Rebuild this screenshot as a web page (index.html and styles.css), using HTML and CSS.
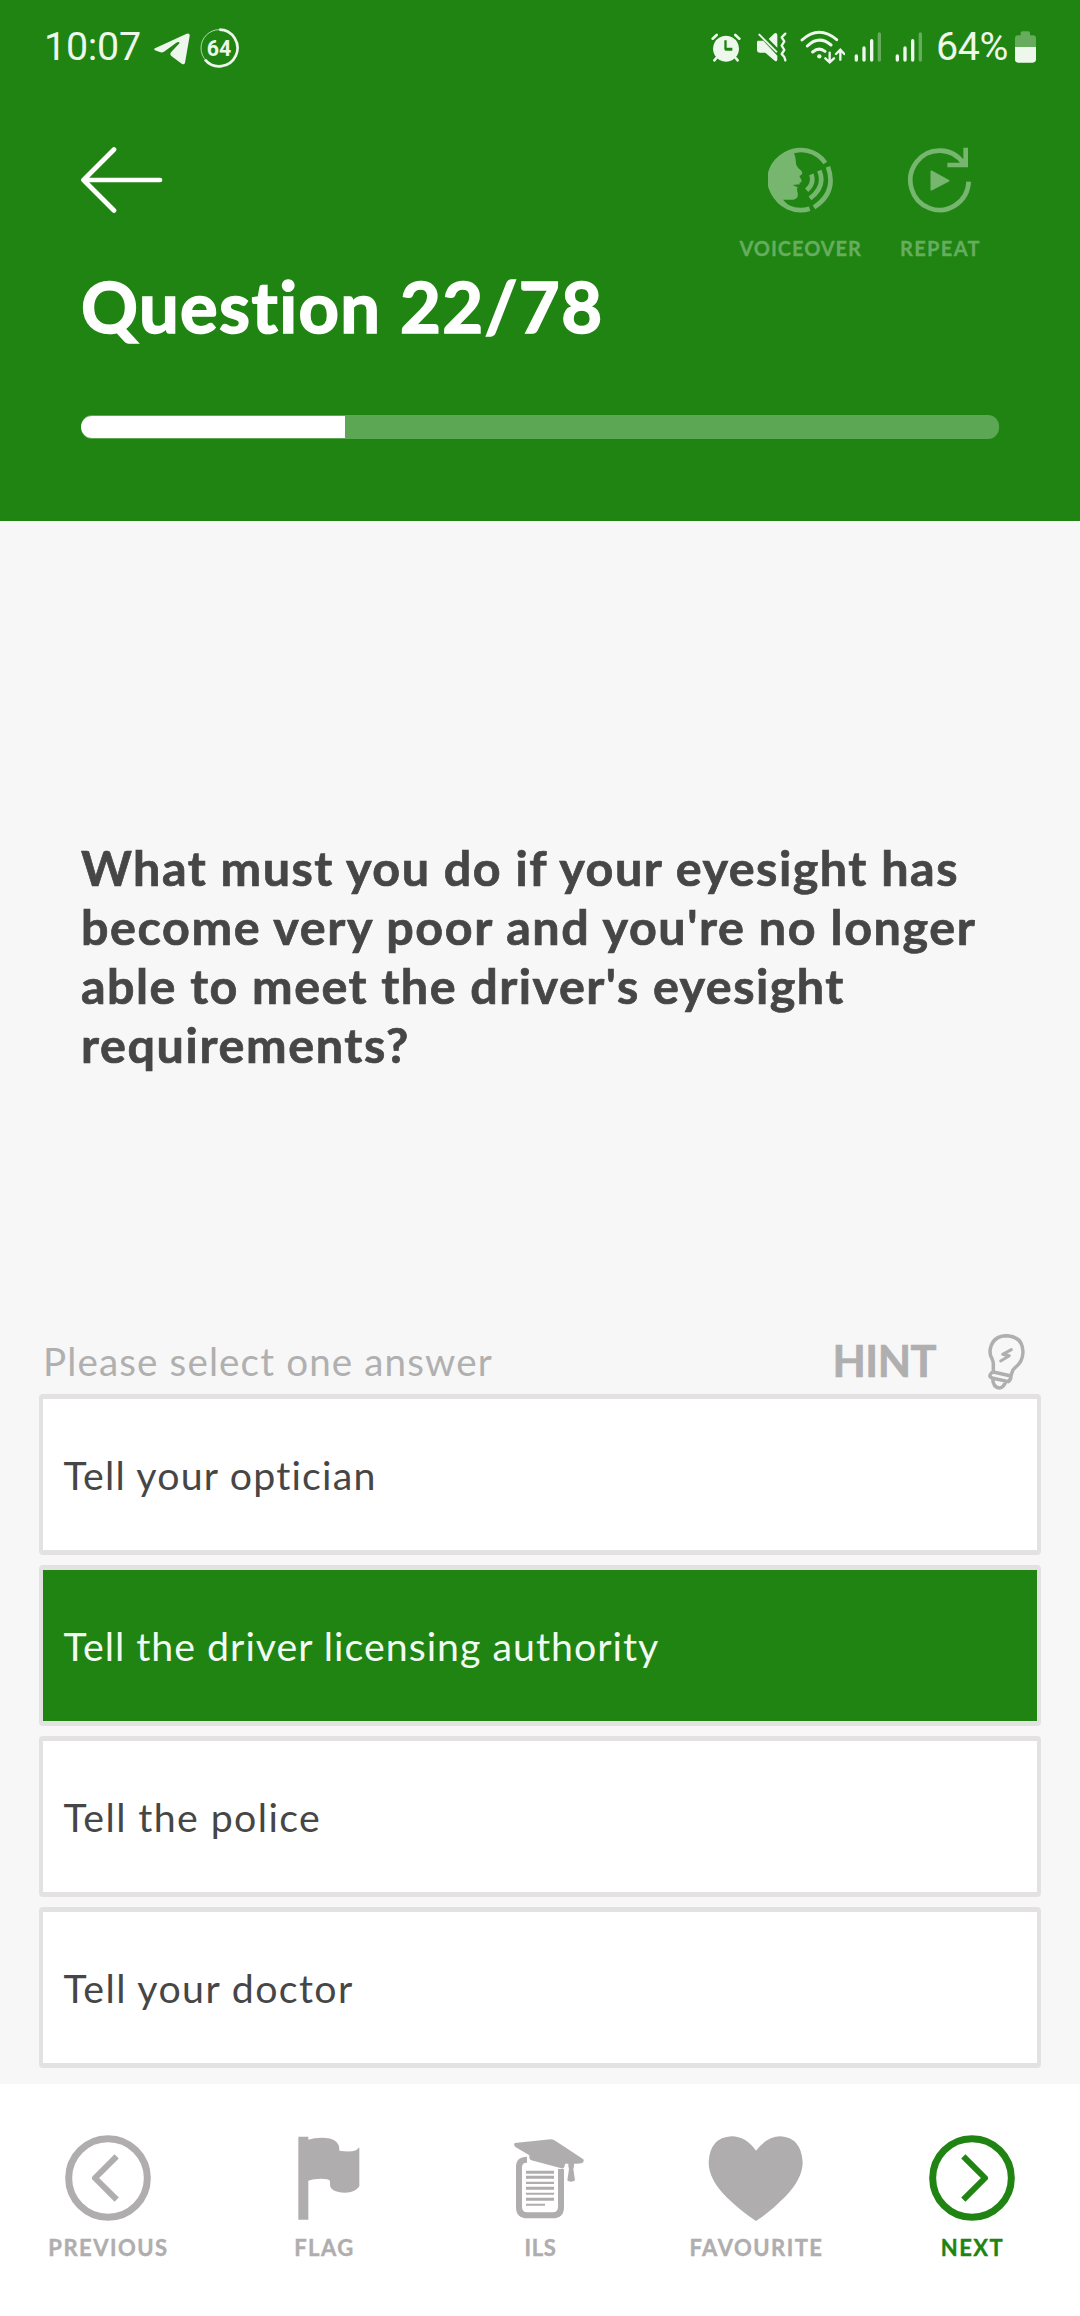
FILE: index.html
```html
<!DOCTYPE html>
<html lang="en">
<head>
<meta charset="utf-8">
<title>Question 22/78</title>
<link rel="stylesheet" href="styles.css">
</head>
<body>
<div class="screen">
  <header class="header">
    <div class="status">
      <div class="status-left">
        <span class="clock">10:07</span>
        <svg class="st-telegram" width="36" height="32" viewBox="464 98 108 96" fill="currentColor"><path d="M467 144L562 100Q572 97 571 107L557 187Q555 195 547 190L515 166Q511 161 515 156L541 128Q538 122 531 127L494 154Q488 158 481 155L467 150Q462 147 467 144Z"/></svg>
        <svg class="st-ring" width="39" height="40" viewBox="602 83 117 120" fill="none" stroke="currentColor"><circle cx="660" cy="143" r="55" stroke-width="3" opacity=".7"/><path d="M660 88A55 55 0 1 1 617 178" stroke-width="8"/><text class="ring-text" x="659" y="166" text-anchor="middle">64</text></svg>
      </div>
      <div class="status-right">
        <svg width="30" height="30" viewBox="62 97 90 90" fill="currentColor" stroke="currentColor" stroke-linecap="round"><path fill-rule="evenodd" stroke="none" d="M107 105a39 39 0 1 0 .1 0ZM102 119H109V141H126V150H107Q102 150 102 145Z"/><path d="M67 114L79 103M147 114L135 103" stroke-width="8"/><path d="M78 172L72 179M136 172L142 179" stroke-width="8"/></svg>
        <svg class="st-mute" width="31" height="31" viewBox="196 96 93 93" fill="currentColor" stroke="currentColor"><path stroke="none" d="M199 126Q199 122 203 122H218L260 167V180Q258 186 252 182L224 158H208Q199 158 199 150ZM234 117L250 101Q258 96 260 104V143Z"/><path d="M206 104L257 155" stroke-width="6" stroke-linecap="round"/><path d="M284 101L273 112L281 124L273 137L281 150L273 162L281 171L284 181" fill="none" stroke-width="7" stroke-linejoin="round" stroke-linecap="round"/></svg>
        <svg class="st-wifi" width="45" height="34" viewBox="328 88 135 102" fill="none" stroke="currentColor" stroke-width="9" stroke-linecap="round"><path d="M334 118Q385 72 438 117M350 136Q385 102 421 133M366 154Q385 138 403 152"/><circle cx="386" cy="167" r="6.500" fill="currentColor" stroke="none"/><path d="M417 156V184M404 173L417 185L430 173M449 177V149M436 160L449 147L461 160" stroke-width="7"/></svg>
        <svg class="st-sig" width="28" height="30" viewBox="491 95 84 90" fill="none" stroke="currentColor" stroke-width="10" stroke-linecap="round"><path d="M498 167V179M521 143V179M544 121V179"/><path d="M567 101V179" opacity=".35"/></svg>
        <svg class="st-sig2" width="28" height="30" viewBox="491 95 84 90" fill="none" stroke="currentColor" stroke-width="10" stroke-linecap="round"><path d="M498 167V179M521 143V179M544 121V179"/><path d="M567 101V179" opacity=".35"/></svg>
        <span class="percent">64%</span>
        <svg class="st-batt" width="21" height="32" viewBox="975 93 63 96" fill="currentColor"><path opacity=".35" d="M975 142V115Q975 106 984 106H992V99Q992 94 997 94H1015Q1020 94 1020 99V106H1029Q1038 106 1038 115V142Z"/><path d="M975 141H1038V178Q1038 188 1028 188H985Q975 188 975 178Z"/></svg>
      </div>
    </div>
    <div class="head-main">
      <div>
        <svg class="back" width="82" height="66" viewBox="81 147.500 82 66" fill="none" stroke="#fff" stroke-width="4.700" stroke-linecap="round" stroke-linejoin="round"><path d="M114 150L83.500 180.500L114 211M84 180.500H160"/></svg>
        <h1 class="title">Question 22/78</h1>
      </div>
      <div class="actions">
        <div class="action">
          <svg width="66" height="66" viewBox="200 82 198 198" fill="none" stroke="currentColor" stroke-width="14"><path d="M372 130A90 90 0 1 0 325 267"/><path stroke="none" fill="currentColor" d="M276 97Q283 108 284 132Q286 143 300 153Q305 160 301 165L294 169L301 182Q302 189 294 189L296 194L274 196L289 203Q285 210 289 219Q292 238 276 240H245L270 266A88 88 0 0 1 276 92Z"/><path d="M330 164Q340 190 316 212M354 153Q374 200 326 236M380 141Q407 218 338 263"/></svg>
          <span>VOICEOVER</span>
        </div>
        <div class="action">
          <svg width="66" height="66" viewBox="620 82 198 198" fill="none" stroke="currentColor" stroke-width="14"><path d="M805 186A87.500 89 0 1 1 790 132M796 84V136H741"/><path fill="currentColor" stroke-width="5" stroke-linejoin="round" d="M693 155V210L745 183Z"/></svg>
          <span class="repeat">REPEAT</span>
        </div>
      </div>
    </div>
    <div class="progress"><div class="bar" style="width:264px"></div></div>
  </header>

  <main class="main">
    <p class="question"><span class="q1">What must you do if your eyesight has</span><br><span class="q2">become very poor and you're no longer</span><br><span class="q3">able to meet the driver's eyesight</span><br><span class="q4">requirements?</span></p>
    <div class="prompt">
      <span class="prompt-text">Please select one answer</span>
      <div class="hint">
        <span>HINT</span>
        <svg width="37" height="56" viewBox="563 74 111 168" fill="none" stroke="currentColor" stroke-width="10.500" stroke-linejoin="round" stroke-linecap="round"><path d="M579 188V164Q579 156 575 148Q569 138 569 127Q572 81 619 79Q667 82 668 128Q667 158 645 174Q637 180 635 190L632 199M579 188L632 200Q632 211 624 217L575 206Q565 202 571 194Q574 188 579 188M577 208Q578 234 597 236Q608 236 616 218"/><path d="M633 121L607 135L627 139L601 155" stroke-width="9"/></svg>
      </div>
    </div>
    <div class="answers">
      <div class="answer">Tell your optician</div>
      <div class="answer authority">Tell the driver licensing authority</div>
      <div class="answer police">Tell the police</div>
      <div class="answer doctor">Tell your doctor</div>
    </div>
  </main>

  <nav class="nav">
    <div class="item">
      <svg width="86" height="86" viewBox="195 196 258 258" fill="none" stroke="currentColor"><circle cx="324" cy="325" r="118" stroke-width="21"/><path d="M350 260L285 325L350 390" stroke-width="18" stroke-linejoin="round"/></svg>
      <span>PREVIOUS</span>
    </div>
    <div class="item">
      <svg width="71" height="86" viewBox="866 196 213 258" fill="currentColor"><path d="M894 201H924V210Q940 204 965 204Q1017 204 1017 240V243Q1068 250 1075 234H1077V350Q1065 369 1034 369Q990 367 989 345V333Q985 327 962 327Q938 327 924 333V450H894Z"/></svg>
      <span>FLAG</span>
    </div>
    <div class="item">
      <svg width="90" height="86" viewBox="105 196 270 258" fill="currentColor"><path d="M164 220L272 209Q280 209 288 215L370 269Q374 275 368 279Q361 282 342 282V290L340 298L345 332Q342 336 333 336Q324 336 322 332L327 298L325 290V282H315Q314 298 304 296L214 272Q207 270 208 257L165 231Q160 224 164 220Z"/><path d="M201 270Q177 270 177 292V412Q177 437 202 437H278Q303 437 303 412V298" fill="none" stroke="currentColor" stroke-width="18"/><path d="M198 303H282V312H198ZM198 318H282V327H198ZM198 336H282V343H198ZM198 351H282V360H198ZM198 369H282V375H198ZM198 384H282V393H198ZM198 402H255V408H198Z"/></svg>
      <span class="ils">ILS</span>
    </div>
    <div class="item">
      <svg class="heart" width="95" height="86" viewBox="742 198 285 258" fill="currentColor"><path d="M886 245Q855 202 813 202Q747 206 744 280Q744 332 798 385Q842 428 886 456Q930 428 972 385Q1026 330 1026 280Q1022 206 959 202Q920 202 886 245Z"/></svg>
      <span>FAVOURITE</span>
    </div>
    <div class="item next">
      <svg width="86" height="86" viewBox="195 196 258 258" fill="none" stroke="currentColor"><circle cx="324" cy="325" r="118" stroke-width="21"/><path d="M298 260L363 325L298 390" stroke-width="18" stroke-linejoin="round"/></svg>
      <span>NEXT</span>
    </div>
  </nav>
</div>
</body>
</html>
```
FILE: styles.css
```css
* { box-sizing: border-box; margin: 0; padding: 0; }
body { background: #fff; font-family: Lato, "Liberation Sans", sans-serif; }
svg { display: block; flex: none; }
.screen { width: 1080px; height: 2316px; display: flex; flex-direction: column; overflow: hidden; white-space: nowrap; }

.header { height: 521px; background: #1f8412; color: #fff; }
.status { height: 95px; padding: 0 44px; display: flex; justify-content: space-between; align-items: center; color: #edf7eb; font: 39.4px/46px Roboto, sans-serif; }
.status-left, .status-right { display: flex; align-items: center; }
.clock { width: 96px; letter-spacing: -.25px; padding-bottom: 2px; }
.st-telegram { margin: 2px 0 0 14px; }
.st-ring { margin-left: 10px; }
.ring-text { font: 700 64px Roboto, sans-serif; fill: currentColor; stroke: none; }
.st-mute { margin-left: 15px; }
.st-wifi { margin-left: 13px; margin-bottom: 2px; }
.st-sig { margin-left: 9px; margin-bottom: 1px; }
.st-sig2 { margin-left: 13px; margin-bottom: 1px; }
.percent { margin-left: 13px; width: 73px; letter-spacing: -.4px; padding-bottom: 2px; }
.st-batt { margin-left: 6px; margin-bottom: 1px; }

.head-main { padding: 52px 80px 0; display: flex; justify-content: space-between; }
.back { margin-left: 1px; }
.title { margin-top: 51px; font-size: 70.5px; line-height: 84px; font-weight: 700; letter-spacing: 1.4px; padding-left: 1px; -webkit-text-stroke: 1.6px currentColor; }
.actions { display: flex; gap: 38px; margin-right: 19px; align-items: flex-start; color: #77b66f; }
.action { display: flex; flex-direction: column; align-items: center; }
.action span { margin-top: 22.5px; font-size: 20px; line-height: 24px; font-weight: 700; letter-spacing: .95px; color: #67ad5f; -webkit-text-stroke: .3px currentColor; }
.action .repeat { letter-spacing: 1.4px; }
.progress { margin: 67px 81px 0; height: 24px; padding: 1px 0; border-radius: 11px; background: #5ba753; overflow: hidden; }
.bar { height: 22px; border-radius: 11px 0 0 11px; background: #fff; }

.main { height: 1563px; background: #f7f7f7; padding: 317px 39px 0; }
.question { padding-left: 42px; height: 236px; font-size: 48.5px; line-height: 59px; font-weight: 700; color: #464646; -webkit-text-stroke: .7px currentColor; }
.q1 { letter-spacing: 1.5px; }
.q2 { letter-spacing: 1.57px; }
.q3 { letter-spacing: 1.46px; }
.q4 { letter-spacing: 1.6px; }
.prompt { margin-top: 256px; height: 64px; padding: 0 16px 0 4px; display: flex; align-items: center; justify-content: space-between; color: #b0b0b0; }
.prompt-text { font-size: 38.6px; letter-spacing: 1.13px; padding-bottom: 3px; }
.hint { display: flex; align-items: center; gap: 52px; color: #b0afaf; }
.hint span { font-size: 43.3px; font-weight: 700; letter-spacing: -.5px; padding-bottom: 5px; -webkit-text-stroke: .7px currentColor; }
.answers { display: flex; flex-direction: column; gap: 10px; }
.answer { height: 161px; border: solid #e4e1e2; border-width: 5px 4px; border-radius: 4px; background: #fff; padding-left: 20.5px; font-size: 39.3px; line-height: 151px; letter-spacing: 1.2px; color: #464646; }
.authority { background: #1f8412; color: #f2fbf1; letter-spacing: 1px; }
.police { letter-spacing: 1.4px; }
.doctor { letter-spacing: 1.4px; }

.nav { height: 232px; background: #fff; padding-top: 51px; display: grid; grid-template-columns: repeat(5, 1fr); color: #b0adae; }
.item { display: flex; flex-direction: column; align-items: center; }
.item span { margin-top: 14px; font-size: 22px; line-height: 26px; font-weight: 700; letter-spacing: 1.5px; padding-left: 1px; -webkit-text-stroke: .4px currentColor; }
.item .ils { letter-spacing: .7px; }
.heart { margin-right: 2px; }
.next { color: #1f8412; }
```
